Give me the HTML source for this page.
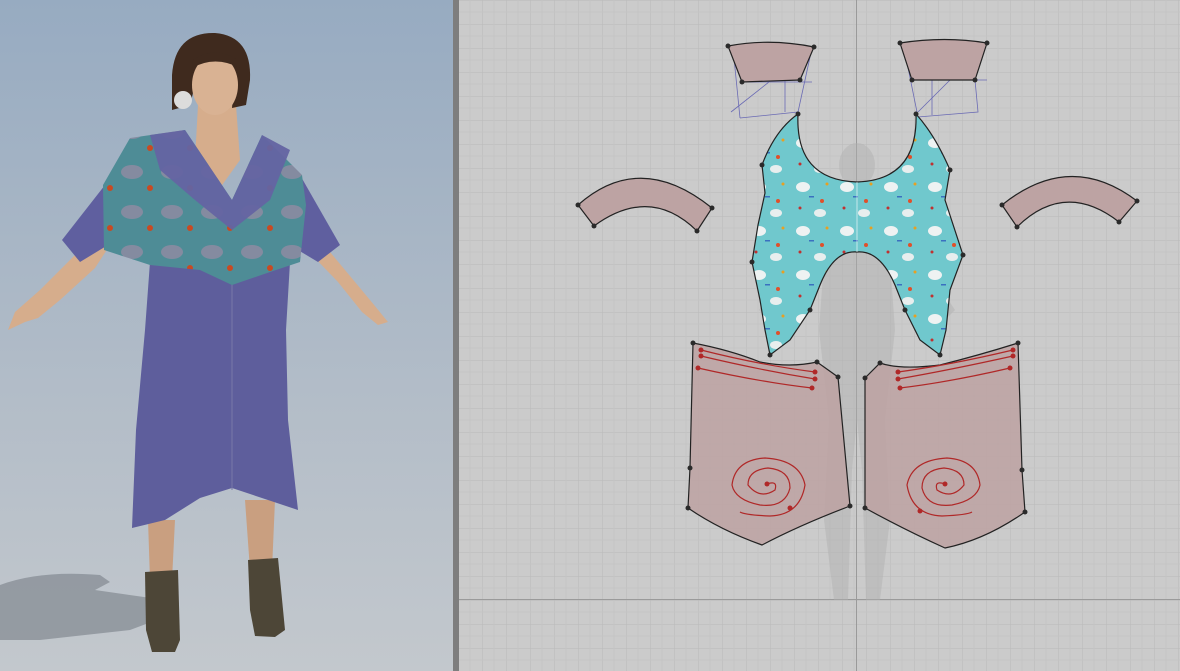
<!DOCTYPE html>
<html><head><meta charset="utf-8"><style>
html,body{margin:0;padding:0;width:1180px;height:671px;overflow:hidden;background:#cbcbcb}
svg{display:block}
</style></head><body>
<svg width="1180" height="671" viewBox="0 0 1180 671" xmlns="http://www.w3.org/2000/svg">
<defs>
<linearGradient id="bg" x1="0" y1="0" x2="0" y2="1">
<stop offset="0" stop-color="#97abc1"/><stop offset="0.6" stop-color="#b3bdc8"/><stop offset="1" stop-color="#c3c8cd"/>
</linearGradient>
<pattern id="grid" width="24" height="24" patternUnits="userSpaceOnUse" x="458" y="0">
<rect width="24" height="24" fill="#cbcbcb"/>
<path d="M0 0H24M0 0V24" stroke="#bababa" stroke-width="1"/>
<path d="M12 0V24M0 12H24" stroke="#c4c4c4" stroke-width="1"/>
</pattern>
<pattern id="fab" width="44" height="44" patternUnits="userSpaceOnUse">
<rect width="44" height="44" fill="#70c8cd"/>
<ellipse cx="11" cy="11" rx="7" ry="5" fill="#eef2f2"/>
<circle cx="30" cy="25" r="2" fill="#e0502a"/>
<circle cx="35" cy="8" r="1.5" fill="#e8a020"/>
<ellipse cx="28" cy="37" rx="6" ry="4" fill="#e8eeee"/>
<circle cx="8" cy="32" r="1.5" fill="#c03030"/>
<rect x="17" y="20" width="5" height="1.5" fill="#3a70c0"/>
</pattern>
<pattern id="fab2" width="40" height="40" patternUnits="userSpaceOnUse">
<rect width="40" height="40" fill="#4e8c96"/>
<ellipse cx="12" cy="12" rx="11" ry="7" fill="#a98aa6" opacity="0.6"/>
<circle cx="30" cy="28" r="3" fill="#c84a22"/>
</pattern>
</defs>
<rect x="0" y="0" width="453" height="671" fill="url(#bg)"/>
<rect x="453" y="0" width="6" height="671" fill="#7e7e7e"/>
<rect x="459" y="0" width="721" height="671" fill="url(#grid)"/>
<line x1="856.5" y1="0" x2="856.5" y2="671" stroke="#9a9a9a"/>
<line x1="459" y1="599.5" x2="1180" y2="599.5" stroke="#9a9a9a"/>

<!-- mannequin silhouette -->
<g fill="#b0b0b0" opacity="0.45">
<ellipse cx="857" cy="165" rx="18" ry="22"/>
<path d="M845 185H869L880 205L915 250L955 310L945 320L905 270L890 260L895 330L885 420L890 520L880 600L866 600L862 470L857 420L852 470L848 600L834 600L824 520L829 420L819 330L824 260L809 270L769 320L759 310L799 250L834 205Z"/>
</g>

<!-- floor shadow -->
<path d="M0 585Q40 570 100 575L110 582L95 590L165 600L170 615L130 630L40 640L0 640Z" fill="#868c94" opacity="0.75"/>

<!-- figure -->
<g>
<path d="M105 225L70 260L40 290L15 312L8 330L25 322L38 318L60 300L95 268L110 245Z" fill="#d6ad8c"/>
<path d="M320 240L345 270L370 300L388 322L378 325L362 312L338 282L312 255Z" fill="#d6ad8c"/>
<path d="M148 520L175 520L172 580L150 580Z" fill="#c99f80"/>
<path d="M245 500L275 500L272 570L250 570Z" fill="#c99f80"/>
<path d="M145 572L178 570L180 640L175 652L152 652L146 630Z" fill="#4d4637"/>
<path d="M248 560L278 558L285 630L275 637L255 636L250 610Z" fill="#4d4637"/>
<path d="M198 105H236L240 160L215 195L195 160Z" fill="#d6ad8c"/>
<path d="M172 75Q175 32 215 33Q252 36 250 80L246 105L232 108L235 70L200 65L190 105L172 110Z" fill="#3f2a1e"/>
<ellipse cx="183" cy="100" rx="9" ry="9" fill="#dcdcdc"/>
<ellipse cx="215" cy="85" rx="23" ry="30" fill="#d9b293"/>
<path d="M192 68Q215 55 240 68L238 60Q215 45 193 60Z" fill="#3f2a1e"/>
<path d="M105 185L62 240L80 262L108 245Z" fill="#5f5f9f"/>
<path d="M300 175L340 245L318 262L298 250Z" fill="#5f5f9f"/>
<path d="M150 262L290 262L286 330L288 420L298 510L268 500L232 488L200 498L165 520L132 528L136 430L145 330Z" fill="#5e5e9c"/>
<line x1="232" y1="270" x2="232" y2="490" stroke="#7878a8"/>
<path d="M130 138L185 130L232 200L262 135L302 175L306 205L300 262L270 272L232 285L200 270L150 265L104 250L103 185Z" fill="url(#fab2)"/>
<path d="M150 135L185 130L232 200L262 135L290 150L270 200L232 230L195 200L160 170Z" fill="#6464a2" opacity="0.95"/>
</g>

<!-- pattern pieces -->
<g stroke="#222" stroke-width="1.2">
<path d="M731 112L812 48M740 118L798 112M740 118L733 48M798 112L812 48M785 48V112M740 82H812" stroke="#6a6ab4" fill="none" stroke-width="0.8"/>
<path d="M728 46Q770 38 814 47L800 80L742 82Z" fill="#bda3a3"/>
<path d="M918 112L987 43M975 80L978 112L918 117L903 43M932 43V115M912 80H987" stroke="#6a6ab4" fill="none" stroke-width="0.8"/>
<path d="M900 43Q945 36 987 43L975 80L912 80Z" fill="#bda3a3"/>
<path d="M578 205Q640 150 712 208L697 231Q650 185 594 226Z" fill="#bda3a3"/>
<path d="M1002 205Q1070 150 1137 201L1119 222Q1065 180 1017 227Z" fill="#bda3a3"/>
<path d="M798 114Q795 180 857 182Q918 180 916 114Q935 135 950 170L945 200L963 255L950 290L946 330L940 355L920 340L905 310L895 285Q880 250 857 252Q834 250 820 285L810 310L790 340L770 355L765 330L760 300L752 262L758 225L765 193L762 165Q775 130 798 114Z" fill="url(#fab)"/>
<line x1="857" y1="182" x2="857" y2="252" stroke="#fff" stroke-width="0.6"/>
<path d="M693 343Q730 350 760 362Q790 368 817 362L838 377L850 506Q800 525 762 545Q720 530 688 508L690 468Z" fill="#bda3a3" fill-opacity="0.88"/>
<path d="M865 378L880 363Q900 370 940 365Q980 355 1018 343L1022 470L1025 512Q985 540 945 548Q905 530 865 508Z" fill="#bda3a3" fill-opacity="0.88"/>
</g>
<g fill="none" stroke="#b02828" stroke-width="1.2">
<path d="M701 350Q760 365 815 372M701 356Q760 370 815 379M698 368Q760 382 812 388"/>
<path d="M1013 350Q950 365 898 372M1013 356Q950 370 898 379M1010 368Q950 382 900 388"/>
<path d="M767 484Q778 480 775 490Q760 500 748 485Q748 470 768 468Q790 470 790 488Q785 508 760 505Q735 500 732 485Q735 460 765 458Q800 460 805 485Q800 515 770 516Q745 515 740 512"/>
<path d="M945 484Q934 480 937 490Q952 500 964 485Q964 470 944 468Q922 470 922 488Q927 508 952 505Q977 500 980 485Q977 460 947 458Q912 460 907 485Q912 515 942 516Q967 515 972 512"/>
</g>
<g fill="#b02828">
<circle cx="701" cy="350" r="2.5"/><circle cx="701" cy="356" r="2.5"/><circle cx="698" cy="368" r="2.5"/>
<circle cx="815" cy="372" r="2.5"/><circle cx="815" cy="379" r="2.5"/><circle cx="812" cy="388" r="2.5"/>
<circle cx="1013" cy="350" r="2.5"/><circle cx="1013" cy="356" r="2.5"/><circle cx="1010" cy="368" r="2.5"/>
<circle cx="898" cy="372" r="2.5"/><circle cx="898" cy="379" r="2.5"/><circle cx="900" cy="388" r="2.5"/>
<circle cx="767" cy="484" r="2.5"/><circle cx="790" cy="508" r="2.5"/>
<circle cx="945" cy="484" r="2.5"/><circle cx="920" cy="511" r="2.5"/>
</g>
<g fill="#2a2a2a">
<circle cx="728" cy="46" r="2.5"/><circle cx="814" cy="47" r="2.5"/><circle cx="800" cy="80" r="2.5"/><circle cx="742" cy="82" r="2.5"/>
<circle cx="900" cy="43" r="2.5"/><circle cx="987" cy="43" r="2.5"/><circle cx="975" cy="80" r="2.5"/><circle cx="912" cy="80" r="2.5"/>
<circle cx="578" cy="205" r="2.5"/><circle cx="594" cy="226" r="2.5"/><circle cx="697" cy="231" r="2.5"/><circle cx="712" cy="208" r="2.5"/>
<circle cx="1002" cy="205" r="2.5"/><circle cx="1017" cy="227" r="2.5"/><circle cx="1119" cy="222" r="2.5"/><circle cx="1137" cy="201" r="2.5"/>
<circle cx="798" cy="114" r="2.5"/><circle cx="916" cy="114" r="2.5"/><circle cx="762" cy="165" r="2.5"/><circle cx="950" cy="170" r="2.5"/>
<circle cx="752" cy="262" r="2.5"/><circle cx="963" cy="255" r="2.5"/><circle cx="770" cy="355" r="2.5"/><circle cx="940" cy="355" r="2.5"/>
<circle cx="810" cy="310" r="2.5"/><circle cx="905" cy="310" r="2.5"/>
<circle cx="693" cy="343" r="2.5"/><circle cx="817" cy="362" r="2.5"/><circle cx="838" cy="377" r="2.5"/><circle cx="850" cy="506" r="2.5"/><circle cx="688" cy="508" r="2.5"/><circle cx="690" cy="468" r="2.5"/>
<circle cx="865" cy="378" r="2.5"/><circle cx="880" cy="363" r="2.5"/><circle cx="1018" cy="343" r="2.5"/><circle cx="1022" cy="470" r="2.5"/><circle cx="1025" cy="512" r="2.5"/><circle cx="865" cy="508" r="2.5"/>
</g>
</svg>
</body></html>
